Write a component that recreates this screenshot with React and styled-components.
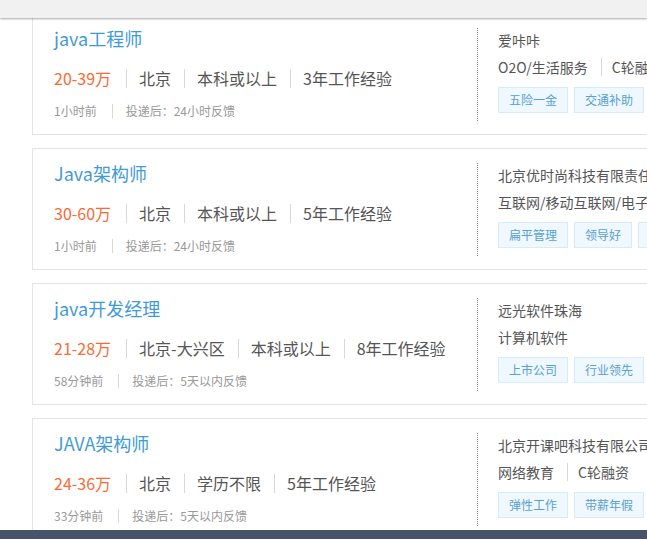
import React from 'react';
import styled, { createGlobalStyle } from 'styled-components';

const jobs = [
  {
    title: 'java工程师',
    salary: '20-39万',
    info: ['北京', '本科或以上', '3年工作经验'],
    time: '1小时前',
    feedback: '投递后：24小时反馈',
    company: '爱咔咔',
    industry: ['O2O/生活服务', 'C轮融资'],
    tags: ['五险一金', '交通补助', '年底双薪'],
  },
  {
    title: 'Java架构师',
    salary: '30-60万',
    info: ['北京', '本科或以上', '5年工作经验'],
    time: '1小时前',
    feedback: '投递后：24小时反馈',
    company: '北京优时尚科技有限责任公司',
    industry: ['互联网/移动互联网/电子商务'],
    tags: ['扁平管理', '领导好', '弹性工作'],
  },
  {
    title: 'java开发经理',
    salary: '21-28万',
    info: ['北京-大兴区', '本科或以上', '8年工作经验'],
    time: '58分钟前',
    feedback: '投递后：5天以内反馈',
    company: '远光软件珠海',
    industry: ['计算机软件'],
    tags: ['上市公司', '行业领先', '技术大牛'],
  },
  {
    title: 'JAVA架构师',
    salary: '24-36万',
    info: ['北京', '学历不限', '5年工作经验'],
    time: '33分钟前',
    feedback: '投递后：5天以内反馈',
    company: '北京开课吧科技有限公司',
    industry: ['网络教育', 'C轮融资'],
    tags: ['弹性工作', '带薪年假', '五险一金'],
  },
];

const App = () => {
  return (
    <>
      <GlobalStyle />
      <TopBar />
      <JobList>
        {jobs.map((job) => (
          <Card key={job.title + job.salary}>
            <Main>
              <Title>{job.title}</Title>
              <InfoRow>
                <Salary>{job.salary}</Salary>
                {job.info.map((item) => (
                  <InfoItem key={item}>{item}</InfoItem>
                ))}
              </InfoRow>
              <MetaRow>
                <MetaItem>{job.time}</MetaItem>
                <MetaItem>{job.feedback}</MetaItem>
              </MetaRow>
            </Main>
            <Side>
              <Company>{job.company}</Company>
              <Industry>
                {job.industry.map((item) => (
                  <IndustryItem key={item}>{item}</IndustryItem>
                ))}
              </Industry>
              <Tags>
                {job.tags.map((tag) => (
                  <Tag key={tag}>{tag}</Tag>
                ))}
              </Tags>
            </Side>
          </Card>
        ))}
      </JobList>
      <BottomBar />
    </>
  );
};

export default App;

// -----------STYLED COMPONENTS---------

const GlobalStyle = createGlobalStyle`
  html, body {
    margin: 0;
    padding: 0;
    background: #fff;
    overflow: hidden;
    height: 100%;
  }
  body {
    font-family: "Noto Sans CJK SC", "Liberation Sans", sans-serif;
    color: #555;
  }
`;

const TopBar = styled.div`
  position: fixed;
  top: 0;
  left: 0;
  right: 0;
  height: 18px;
  background: #f1f1f1;
  box-shadow: 0 1px 2px rgba(0, 0, 0, 0.35);
  z-index: 2;
`;

const BottomBar = styled.div`
  position: fixed;
  left: 0;
  right: 0;
  bottom: 0;
  height: 9px;
  background: #475369;
  z-index: 2;
`;

const JobList = styled.div`
  display: flex;
  flex-direction: column;
  gap: 13px;
  padding: 13px 0 0 32px;
  width: 900px;
`;

const Card = styled.div`
  display: flex;
  height: 122px;
  box-sizing: border-box;
  border: 1px solid #e4e4e4;
  padding: 14px 0 13px 21px;
  background: #fff;
`;

const Main = styled.div`
  width: 423px;
  flex-shrink: 0;
  display: flex;
  flex-direction: column;
`;

const Title = styled.div`
  font-size: 18px;
  line-height: 20px;
  color: #3f9bd6;
`;

const InfoRow = styled.div`
  display: flex;
  align-items: center;
  margin-top: 18px;
  font-size: 16px;
  line-height: 24px;
  white-space: nowrap;
`;

const Salary = styled.span`
  color: #fc6a34;
  padding-right: 15px;
`;

const InfoItem = styled.span`
  color: #555;
  padding: 0 13px 0 12px;
  border-left: 1px solid #d8d8d8;
  line-height: 19px;
`;

const MetaRow = styled.div`
  display: flex;
  align-items: center;
  margin-top: 14px;
  font-size: 12px;
  line-height: 18px;
  color: #999;
  white-space: nowrap;
`;

const MetaItem = styled.span`
  line-height: 14px;
  padding-right: 15px;
  & + & {
    border-left: 1px solid #d8d8d8;
    padding-left: 13px;
  }
`;

const Side = styled.div`
  border-left: 1px dotted #8a8a8a;
  padding-left: 20px;
  display: flex;
  flex-direction: column;
  white-space: nowrap;
`;

const Company = styled.div`
  font-size: 14px;
  line-height: 24px;
  color: #555;
`;

const Industry = styled.div`
  display: flex;
  align-items: center;
  margin-top: 3px;
  font-size: 14px;
  line-height: 24px;
  color: #555;
`;

const IndustryItem = styled.span`
  padding-right: 13px;
  line-height: 24px;
  & + & {
    border-left: 1px solid #d8d8d8;
    padding-left: 10px;
    line-height: 18px;
  }
`;

const Tags = styled.div`
  display: flex;
  gap: 6px;
  margin-top: 8px;
`;

const Tag = styled.span`
  display: inline-block;
  height: 26px;
  box-sizing: border-box;
  padding: 0 10px;
  border: 1px solid #d7ecf8;
  background: #eef8fe;
  color: #5a9fd0;
  font-size: 12px;
  line-height: 24px;
`;
